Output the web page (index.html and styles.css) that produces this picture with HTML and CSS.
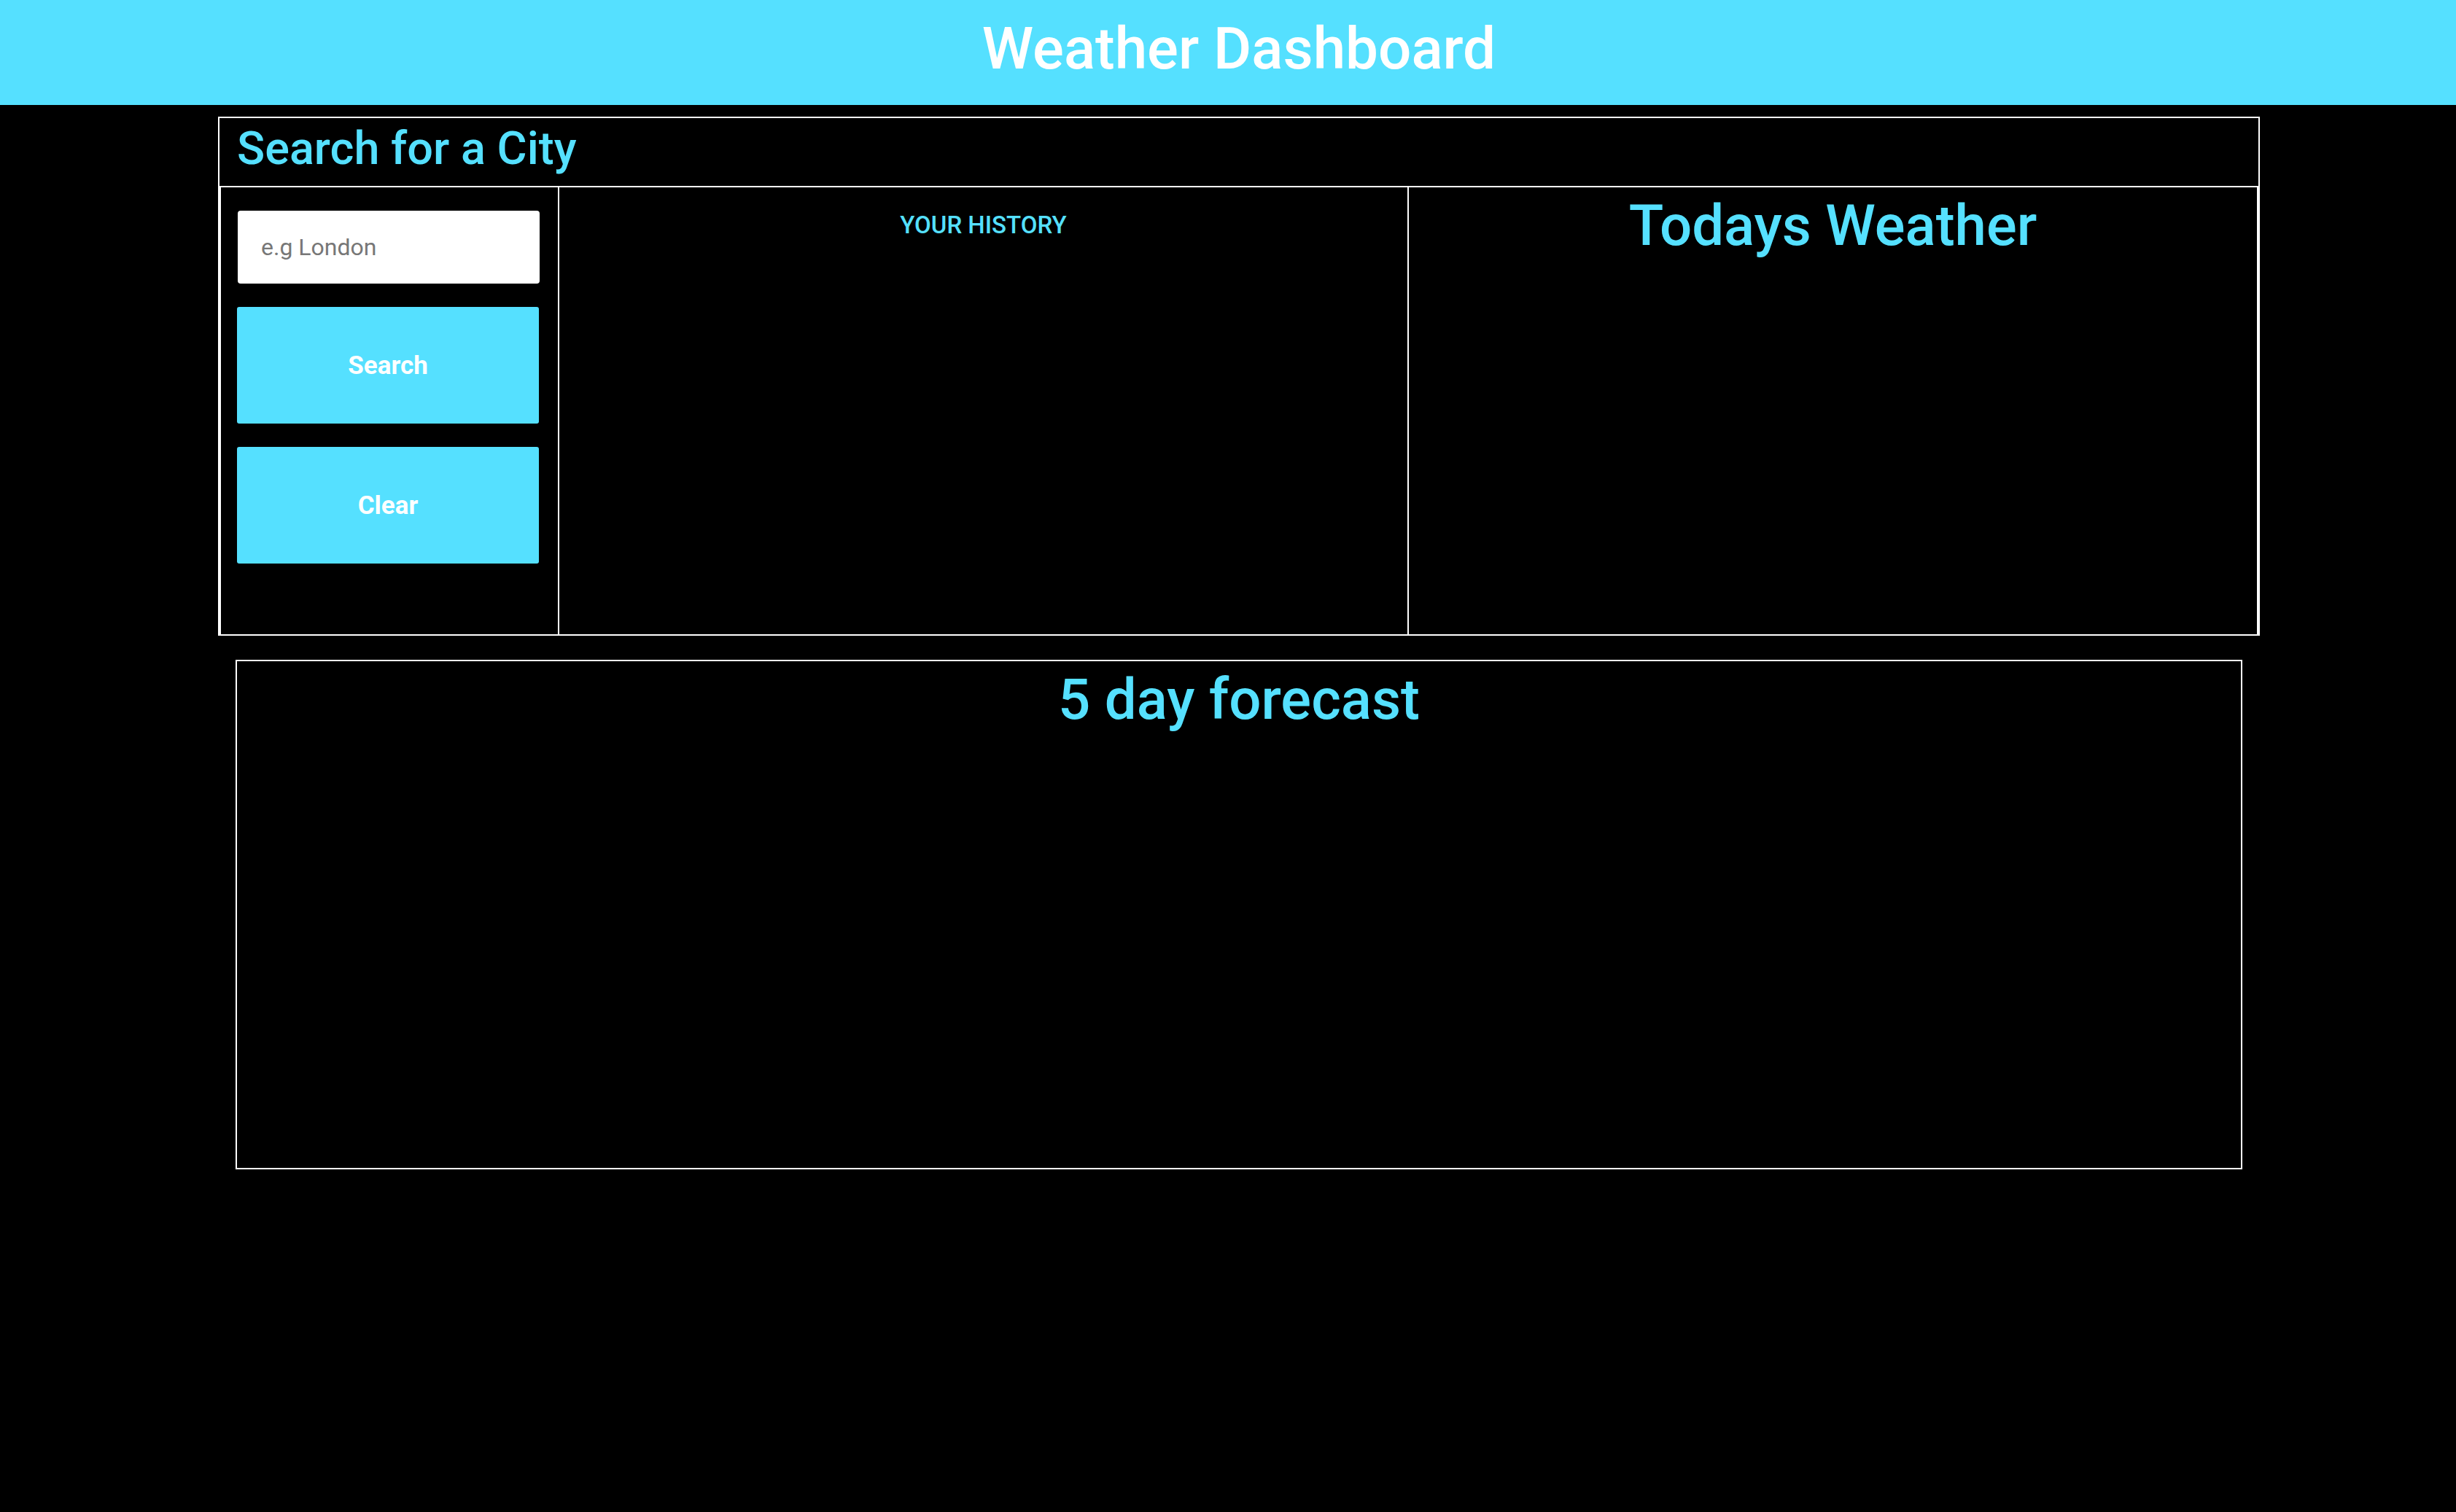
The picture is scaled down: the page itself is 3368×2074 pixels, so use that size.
FILE: index.html
```html
<!DOCTYPE html>
<html lang="en">
<head>
<meta charset="utf-8">
<title>Weather Dashboard</title>
<link rel="stylesheet" href="styles.css">
</head>
<body>
<header class="top-bar">
  <h1 class="top-title">Weather Dashboard</h1>
</header>
<main class="page">
  <section class="search-box">
    <h2 class="search-title">Search for a City</h2>
    <div class="search-row">
      <div class="col col-form">
        <input class="city-input" type="text" placeholder="e.g London">
        <button class="btn">Search</button>
        <button class="btn">Clear</button>
      </div>
      <div class="col col-history">
        <h3 class="history-title">YOUR HISTORY</h3>
      </div>
      <div class="col col-today">
        <h2 class="today-title">Todays Weather</h2>
      </div>
    </div>
  </section>
  <section class="forecast-box">
    <h2 class="forecast-title">5 day forecast</h2>
  </section>
</main>
</body>
</html>
```
FILE: styles.css
```css
* { box-sizing: border-box; }
html, body { margin: 0; padding: 0; }
body {
  background: #000;
  font-family: Roboto, "Liberation Sans", sans-serif;
  min-height: 2074px;
}
.top-bar {
  height: 144px;
  background: #55e0ff;
  display: flex;
  justify-content: center;
  padding-left: 30px;
}
.top-title {
  margin: 0;
  color: #fff;
  font-weight: 500;
  font-size: 80px;
  line-height: 134px;
}
.page {
  padding: 16px 0 0 30px;
}
.search-box {
  width: 2800px;
  margin: 0 auto;
  border: 2px solid #fff;
}
.search-title {
  margin: 0;
  height: 95px;
  border-bottom: 2px solid #fff;
  padding-left: 24px;
  color: #55e0ff;
  font-weight: 500;
  font-size: 63px;
  line-height: 84px;
}
.search-row {
  display: grid;
  grid-template-columns: 466px 1fr 1fr;
  height: 613px;
}
.col {
  border: 2px solid #fff;
  border-top: 0;
  border-bottom: 0;
}
.col-form {
  display: flex;
  flex-direction: column;
  gap: 32px;
  padding: 32px 0 0 22px;
}
.col-history { border-left: 0; text-align: center; }
.col-today { border-left: 0; text-align: center; }
.city-input {
  width: 414px;
  height: 100px;
  margin-left: 1px;
  border: 0;
  border-radius: 4px;
  background: #fff;
  padding: 0 0 0 32px;
  font-family: Roboto, "Liberation Sans", sans-serif;
  font-size: 32px;
  color: #333;
  outline: none;
}
.city-input::placeholder { color: #777; }
.btn {
  width: 414px;
  height: 160px;
  border: 0;
  border-radius: 3px;
  background: #55e0ff;
  color: #fff;
  font-family: Roboto, "Liberation Sans", sans-serif;
  font-weight: 700;
  font-size: 35px;
  padding: 0;
}
.history-title {
  margin: 28px 0 0;
  color: #55e0ff;
  font-weight: 500;
  font-size: 33px;
  line-height: 48px;
}
.today-title {
  margin: 3px 0 0;
  color: #55e0ff;
  font-weight: 500;
  font-size: 78px;
  line-height: 100px;
}
.forecast-box {
  width: 2752px;
  height: 699px;
  margin: 33px auto 0;
  border: 2px solid #fff;
  text-align: center;
}
.forecast-title {
  margin: 3px 0 0;
  color: #55e0ff;
  font-weight: 500;
  font-size: 78px;
  line-height: 100px;
}
```
